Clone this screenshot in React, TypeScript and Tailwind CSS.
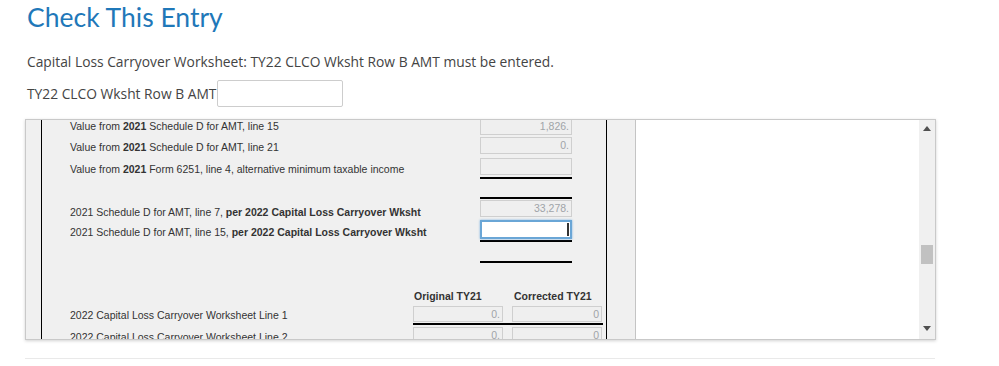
import type { ReactElement } from "react";

// ===== Kotak input (readonly) =====
function Box({ value, w = "w-[92px]", h = "h-[17px]" }: { value?: string; w?: string; h?: string }): ReactElement {
  return (
    <div
      className={`${w} ${h} flex items-center justify-end border border-[#cfcfcf] bg-[#efefef] pr-[2px] text-[10.5px] leading-none text-[#a0a4a8]`}
    >
      {value}
    </div>
  );
}

function Label({ children, mt }: { children: React.ReactNode; mt: string }): ReactElement {
  return <div className={`${mt} w-[410px] shrink-0 text-[10.5px] leading-[13px] text-[#333]`}>{children}</div>;
}

export default function App(): ReactElement {
  return (
    <div className="h-[366px] w-[999px] overflow-hidden bg-white font-['Open_Sans',sans-serif]">
      <div className="px-[25px]">
        <h1 className="pl-[2px] pt-[1px] font-['Lato',sans-serif] text-[26.5px] leading-[32px] text-[#1f78b9]">
          Check This Entry
        </h1>

        <p className="mt-[21px] pl-[2px] text-[13.8px] leading-[16px] text-[#444]">
          Capital Loss Carryover Worksheet: TY22 CLCO Wksht Row B AMT must be entered.
        </p>

        <div className="mt-[10px] flex items-center pl-[2px]">
          <span className="text-[13.8px] leading-[16px] text-[#444]">TY22 CLCO Wksht Row B AMT</span>
          <div className="ml-[1px] h-[27px] w-[126px] rounded-[2px] border border-[#cdcdcd] bg-white" />
        </div>

        {/* ===== Frame worksheet ===== */}
        <div className="mt-[12px] flex h-[221px] w-[911px] overflow-hidden border border-[#c9c9c9] shadow-[0_1px_3px_rgba(0,0,0,0.18)]">
          <div className="w-[15px] shrink-0 bg-[#f0f0f0]" />
          <div className="w-px shrink-0 bg-black" />

          {/* Form */}
          <div className="w-[564px] shrink-0 bg-[#f0f0f0] font-['Liberation_Sans',Arial,sans-serif]">
            <div className="-mt-[4px] pl-[28px]">
              {/* Baris 1 */}
              <div className="flex h-[21px] items-start">
                <Label mt="mt-[4px]">
                  Value from <b>2021</b> Schedule D for AMT, line 15
                </Label>
                <div className="mt-[2px]">
                  <Box value="1,826." />
                </div>
              </div>

              {/* Baris 2 */}
              <div className="flex h-[21px] items-start">
                <Label mt="mt-[4px]">
                  Value from <b>2021</b> Schedule D for AMT, line 21
                </Label>
                <Box value="0." />
              </div>

              {/* Baris 3 */}
              <div className="flex h-[21px] items-start">
                <Label mt="mt-[5px]">
                  Value from <b>2021</b> Form 6251, line 4, alternative minimum taxable income
                </Label>
                <div className="w-[92px] border-b-2 border-black pb-[2px]">
                  <Box />
                </div>
              </div>

              {/* Baris 4 */}
              <div className="mt-[18px] flex h-[20px] items-start">
                <Label mt="mt-[9px]">
                  2021 Schedule D for AMT, line 7, <b>per 2022 Capital Loss Carryover Wksht</b>
                </Label>
                <div className="w-[92px] border-t-2 border-black pt-[1px]">
                  <Box value="33,278." />
                </div>
              </div>

              {/* Baris 5 (fokus) */}
              <div className="flex h-[25px] items-start">
                <Label mt="mt-[9px]">
                  2021 Schedule D for AMT, line 15, <b>per 2022 Capital Loss Carryover Wksht</b>
                </Label>
                <div className="mt-[3px] w-[92px] border-b-2 border-black pb-[1px]">
                  <div className="flex h-[19px] items-center justify-end border-2 border-[#6aa6d6] bg-white pr-[1px] shadow-[0_0_2px_rgba(90,160,220,0.8)]">
                    <div className="h-[13px] w-[2px] bg-[#333]" />
                  </div>
                </div>
              </div>

              <div className="ml-[410px] mt-[19px] h-[2px] w-[92px] bg-black" />

              {/* Kolom TY21 */}
              <div className="ml-[343px] mt-[27px] flex h-[13px] text-[10.5px] font-bold leading-[13px] text-[#333]">
                <span className="w-[99px] pl-[1px]">Original TY21</span>
                <span className="pl-[2px]">Corrected TY21</span>
              </div>

              <div className="mt-[3px] flex items-start">
                <div className="mt-[3px] w-[343px] shrink-0 text-[10.5px] leading-[13px] text-[#333]">
                  2022 Capital Loss Carryover Worksheet Line 1
                </div>
                <div className="flex w-[190px] gap-[9px] border-b-2 border-black pb-[1px]">
                  <Box value="0." w="w-[90px]" h="h-[16px]" />
                  <Box value="0" w="w-[90px]" h="h-[16px]" />
                </div>
              </div>

              <div className="mt-[2px] flex items-start">
                <div className="mt-[4px] w-[343px] shrink-0 text-[10.5px] leading-[13px] text-[#333]">
                  2022 Capital Loss Carryover Worksheet Line 2
                </div>
                <div className="flex gap-[9px]">
                  <Box value="0." w="w-[90px]" h="h-[16px]" />
                  <Box value="0" w="w-[90px]" h="h-[16px]" />
                </div>
              </div>
            </div>
          </div>

          <div className="w-px shrink-0 bg-black" />
          <div className="w-[29px] shrink-0 border-r border-[#c4c4c4] bg-[#f0f0f0]" />

          {/* Area kosong */}
          <div className="flex-1 bg-white" />

          {/* Scrollbar */}
          <div className="flex w-[16px] shrink-0 flex-col items-center bg-[#f0f0f0]">
            <svg className="mt-[6px]" width="8" height="5" viewBox="0 0 8 5">
              <path d="M4 0 L8 5 L0 5 Z" fill="#505050" />
            </svg>
            <div className="mt-[114px] h-[19px] w-[12px] bg-[#c1c1c1]" />
            <div className="flex-1" />
            <svg className="mb-[8px]" width="8" height="5" viewBox="0 0 8 5">
              <path d="M0 0 L8 0 L4 5 Z" fill="#505050" />
            </svg>
          </div>
        </div>

        <div className="mt-[18px] h-px w-[910px] bg-[#e9e9e9]" />
      </div>
    </div>
  );
}
